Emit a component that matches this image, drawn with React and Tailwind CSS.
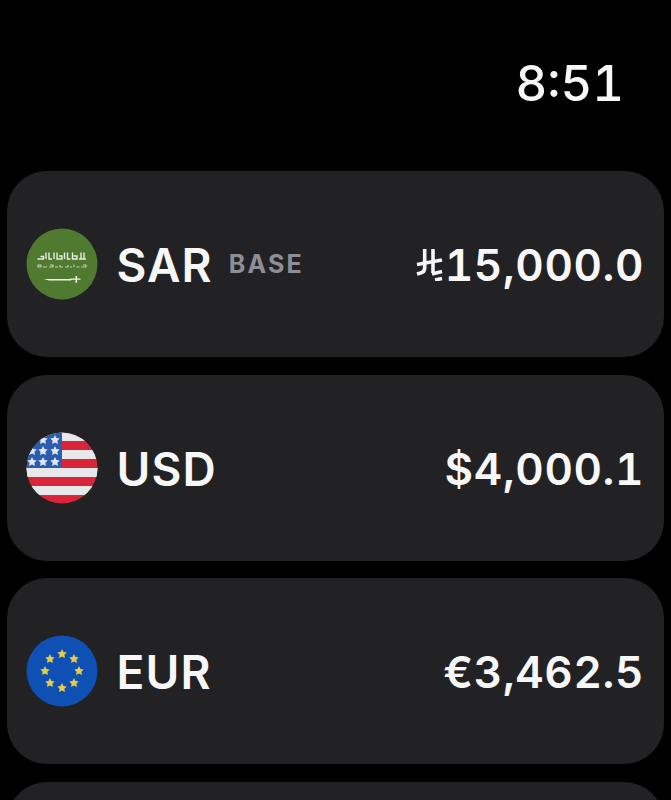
const stars = (cx, cy, r, n = 5, inner = 0.42) => {
  const p = [];
  for (let i = 0; i < n * 2; i++) {
    const a = (Math.PI * i) / n - Math.PI / 2;
    const rr = i % 2 ? r * inner : r;
    p.push(`${(cx + rr * Math.cos(a)).toFixed(2)},${(cy + rr * Math.sin(a)).toFixed(2)}`);
  }
  return p.join(" ");
};

function SaudiFlag() {
  return (
    <svg viewBox="0 0 72 72" className="w-[72px] h-[72px] shrink-0">
      <circle cx="36" cy="36" r="35.5" fill="#4f7a2f" />
      <g stroke="#e6eee0" fill="none" strokeLinecap="butt">
        <path strokeWidth="1.4" d="M11.5 31h6v-2.5h-3M20 24.5v6.5M23 24.5v6.5h3M28 24.5v6.5M31 24.5v6.5h5v-3h-3M38.5 24.5v6.5M41.5 24.5v6.5h3M46.5 24.5v6.5h4.5v-3h-3.5M53 31h7M55 24.5v6.5M58 24.5v6.5" />
        <path strokeWidth="1.1" opacity="0.75" d="M12 39h3v-2h-3zM17 39h4M23 39h4v-2h-3M29 39h3M34 37v2h3M39 39h3v-2M44 39h2M48 36.5v2.5M50.5 39h3M55 39h5v-2h-3" />
      </g>
      <path d="M18 51h26l1.5-.5h4v-2.5h1.6v2.5h3.4v1.3h-3.4v3h-1.6v-3H46l-1 .7H23z" fill="#f2f5ee" />
    </svg>
  );
}

function UsFlag() {
  const rows = [
    [0, "#e8e8ea"], [9, "#d9253a"], [18, "#e8e8ea"], [27, "#d9253a"], [36, "#e8e8ea"], [45, "#d9253a"], [54, "#e8e8ea"], [63, "#d9253a"],
  ];
  const st = [[29, 8], [17, 8], [6, 19], [17, 19], [29, 19], [6, 30], [17, 30], [29, 30]];
  return (
    <svg viewBox="0 0 72 72" className="w-[72px] h-[72px] shrink-0">
      <defs>
        <clipPath id="usclip"><circle cx="36" cy="36" r="35.5" /></clipPath>
      </defs>
      <g clipPath="url(#usclip)">
        {rows.map(([y, c]) => <rect key={y} x="0" y={y} width="72" height="9.5" fill={c} />)}
        <rect x="0" y="0" width="36" height="36" fill="#2b5cad" />
        <rect x="0" y="36" width="72" height="9" fill="#e8e8ea" />
        {st.map(([x, y]) => (
          <polygon key={`${x}-${y}`} points={stars(x, y, 5, 5, 0.5)} fill="#dfe6f2" />
        ))}
      </g>
    </svg>
  );
}

function EuFlag() {
  const pts = [...Array(8)].map((_, i) => {
    const a = (Math.PI * 2 * i) / 8 - Math.PI / 2;
    return [36 + 17 * Math.cos(a), 36 + 17 * Math.sin(a)];
  });
  return (
    <svg viewBox="0 0 72 72" className="w-[72px] h-[72px] shrink-0">
      <circle cx="36" cy="36" r="35.5" fill="#0f50b4" />
      {pts.map(([x, y], i) => <polygon key={i} points={stars(x, y, 5, 5, 0.5)} fill="#e6cd45" />)}
    </svg>
  );
}

function RiyalSign() {
  return (
    <svg viewBox="0 0 27 32" className="w-[27px] h-[32px] shrink-0 mr-[2px]" fill="none" stroke="#f5f5f5" strokeWidth="3.6">
      <path d="M8.7 0v19q0 4-4 5L1 25" />
      <path d="M17 0v24" />
      <path d="M1 15.5 26 11" />
      <path d="M16 25l10-2.5" />
      <path d="M19 31l7-1.5" />
    </svg>
  );
}

function Row({ flag, code, base, children }) {
  return (
    <div className="h-[186px] shrink-0 rounded-[40px] bg-[#222224] flex items-center pl-[18.5px] pr-[20px]">
      {flag}
      <span className="ml-[19px] mt-[2px] text-[46px] leading-none font-semibold text-[#f7f7f7] tracking-[1.1px]">{code}</span>
      {base && <span className="ml-[16px] mt-[1px] text-[25px] leading-none font-bold text-[#8e8e96] tracking-[2.2px]">BASE</span>}
      <span className="ml-auto mt-[2px] flex items-center text-[44px] leading-none font-semibold text-[#f7f7f7] tabular-nums tracking-[0.6px]">{children}</span>
    </div>
  );
}

export default function App() {
  return (
    <div className="w-[671px] h-[800px] bg-black overflow-hidden font-['Inter',sans-serif]">
      <div className="h-[171px] flex justify-end pr-[47px] pt-[56px]">
        <span className="text-[49px] leading-[56px] font-medium text-[#f7f7f7] tabular-nums">8:51</span>
      </div>
      <div className="flex flex-col gap-[17.5px] px-[7px]">
        <Row flag={<SaudiFlag />} code="SAR" base><RiyalSign />15,000.0</Row>
        <Row flag={<UsFlag />} code="USD">$4,000.1</Row>
        <Row flag={<EuFlag />} code="EUR">€3,462.5</Row>
        <div className="h-[186px] shrink-0 rounded-[40px] bg-[#222224]" />
      </div>
    </div>
  );
}
